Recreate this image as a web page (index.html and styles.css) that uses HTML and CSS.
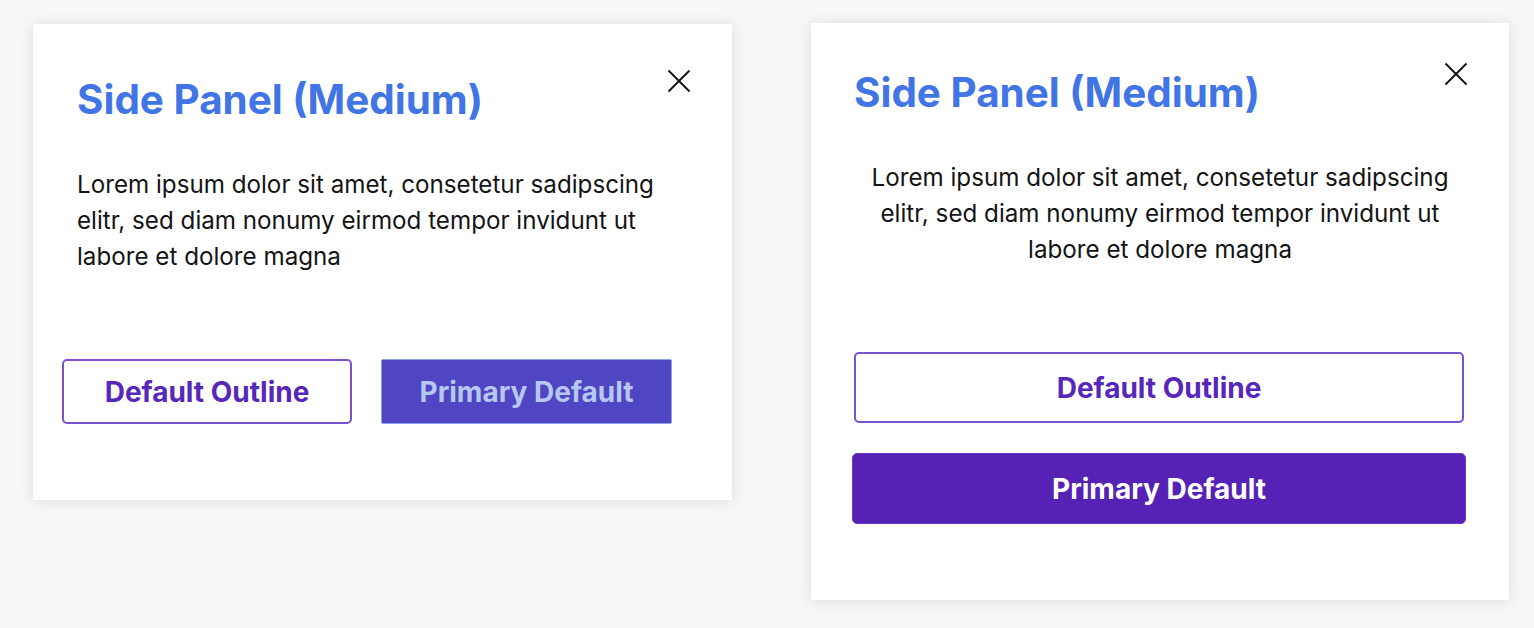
FILE: index.html
```html
<!DOCTYPE html>
<html lang="en">
<head>
<meta charset="utf-8">
<title>Side Panels</title>
<link rel="stylesheet" href="styles.css">
</head>
<body>
  <section class="panel panel-a">
    <header class="panel-head">
      <h2 class="panel-title">Side Panel (Medium)</h2>
      <button class="close-btn" aria-label="Close">
        <svg viewBox="0 0 24 24" width="24" height="24"><path d="M1.5 1.5 L22.5 22.5 M22.5 1.5 L1.5 22.5" stroke="#111" stroke-width="1.9" fill="none"/></svg>
      </button>
    </header>
    <p class="panel-text">Lorem ipsum dolor sit amet, consetetur sadipscing elitr, sed diam nonumy eirmod tempor invidunt ut labore et dolore magna</p>
    <div class="actions actions-row">
      <button class="btn btn-outline">Default Outline</button>
      <button class="btn btn-primary-muted">Primary Default</button>
    </div>
  </section>

  <section class="panel panel-b">
    <header class="panel-head">
      <h2 class="panel-title">Side Panel (Medium)</h2>
      <button class="close-btn" aria-label="Close">
        <svg viewBox="0 0 24 24" width="24" height="24"><path d="M1.5 1.5 L22.5 22.5 M22.5 1.5 L1.5 22.5" stroke="#111" stroke-width="1.9" fill="none"/></svg>
      </button>
    </header>
    <p class="panel-text centered">Lorem ipsum dolor sit amet, consetetur sadipscing elitr, sed diam nonumy eirmod tempor invidunt ut labore et dolore magna</p>
    <div class="actions actions-col">
      <button class="btn btn-outline wide">Default Outline</button>
      <button class="btn btn-primary wide">Primary Default</button>
    </div>
  </section>
</body>
</html>
```
FILE: styles.css
```css
html, body {
  margin: 0;
  padding: 0;
}
body {
  background: #f7f7f7;
  font-family: Inter, "DejaVu Sans", sans-serif;
  display: flex;
  align-items: flex-start;
  gap: 79px;
  padding-left: 33px;
  height: 628px;
  box-sizing: border-box;
  overflow: hidden;
}
.panel {
  background: #fff;
  box-shadow: 0 1px 14px rgba(0, 0, 0, 0.11);
  display: flex;
  flex-direction: column;
  box-sizing: border-box;
}
.panel-a {
  width: 699px;
  height: 476px;
  margin-top: 24px;
}
.panel-b {
  width: 698px;
  height: 577px;
  margin-top: 23px;
}
.panel-head {
  display: flex;
  justify-content: space-between;
  align-items: flex-start;
  padding: 0 41px 0 44px;
}
.panel-a .panel-head { padding-top: 45px; }
.panel-b .panel-head { padding-top: 39px; padding-left: 43px; }
.panel-title {
  margin: 7px 0 0;
  font-size: 40.4px;
  line-height: 48px;
  font-weight: 700;
  color: #4175e6;
}
.close-btn {
  border: 0;
  background: none;
  padding: 0;
  width: 24px;
  height: 24px;
  cursor: pointer;
}
.close-btn svg { display: block; }
.panel-text {
  margin: 43px 0 0;
  padding: 0 42px 0 44px;
  font-size: 24.2px;
  line-height: 36px;
  color: #141414;
}
.panel-b .panel-text { padding: 0 40px; }
.centered { text-align: center; }
.actions { display: flex; margin-top: 84px; }
.actions-row {
  gap: 29px;
  padding-left: 29px;
}
.actions-col {
  flex-direction: column;
  gap: 30px;
  padding: 0 43px 0 41px;
}
.btn {
  font-family: Inter, "DejaVu Sans", sans-serif;
  font-size: 28px;
  font-weight: 700;
  border-radius: 5px;
  box-sizing: border-box;
  cursor: pointer;
}
.actions-row .btn {
  width: 290px;
  height: 65px;
}
.actions-row .btn-primary-muted { width: 291px; }
.btn-outline {
  background: #fff;
  border: 2px solid #7a52d2;
  color: #5627ba;
}
.btn-primary-muted {
  background: #5046c4;
  border: 1px solid #8f9ff0;
  border-radius: 2px;
  color: #b6c7f2;
}
.btn-primary {
  background: #5622b5;
  border: 1px solid #6a3cc6;
  color: #fff;
}
.wide {
  height: 71px;
}
.btn-outline.wide {
  margin: 0 2px;
}
```
